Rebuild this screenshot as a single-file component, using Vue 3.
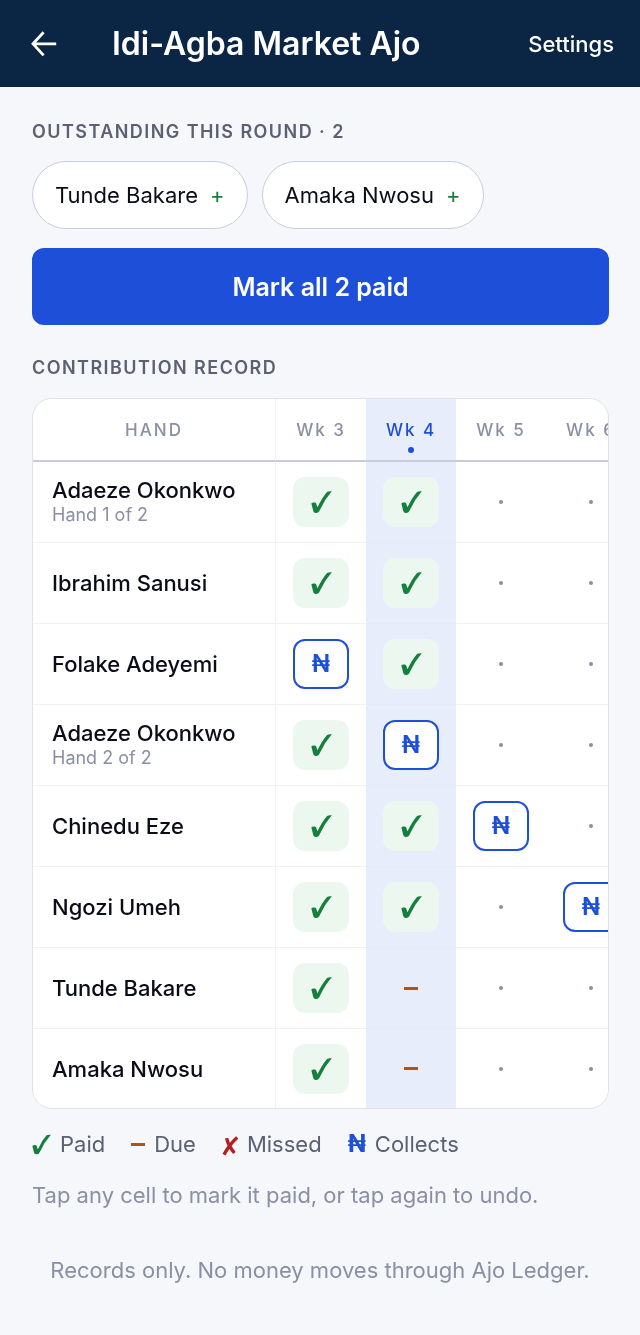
<script setup>
import { computed, ref } from 'vue'

const weeks = [3, 4, 5, 6]
const currentWeek = 4

const hands = ref([
  { name: 'Adaeze Okonkwo', note: 'Hand 1 of 2', cells: ['paid', 'paid', 'none', 'none'] },
  { name: 'Ibrahim Sanusi', cells: ['paid', 'paid', 'none', 'none'] },
  { name: 'Folake Adeyemi', cells: ['collects', 'paid', 'none', 'none'] },
  { name: 'Adaeze Okonkwo', note: 'Hand 2 of 2', cells: ['paid', 'collects', 'none', 'none'] },
  { name: 'Chinedu Eze', cells: ['paid', 'paid', 'collects', 'none'] },
  { name: 'Ngozi Umeh', cells: ['paid', 'paid', 'none', 'collects'] },
  { name: 'Tunde Bakare', cells: ['paid', 'due', 'none', 'none'] },
  { name: 'Amaka Nwosu', cells: ['paid', 'due', 'none', 'none'] }
])

const current = weeks.indexOf(currentWeek)
const outstanding = computed(() => hands.value.filter((h) => h.cells[current] === 'due'))

function markPaid(hand) {
  hand.cells[current] = 'paid'
}

function markAll() {
  outstanding.value.forEach(markPaid)
}

function toggle(hand, i) {
  const state = hand.cells[i]
  if (state === 'collects') return
  if (state === 'paid') hand.cells[i] = i <= current ? 'due' : 'none'
  else hand.cells[i] = 'paid'
}
</script>

<template>
  <div class="page">
    <header class="bar">
      <button class="back" type="button" aria-label="Back">
        <svg width="26" height="26" viewBox="0 0 26 26" fill="none" stroke="currentColor" stroke-width="2.8">
          <path d="M25.2 12.8H2.5M12.6 1.2L2 12.8l10.6 11.6" />
        </svg>
      </button>
      <h1>Idi-Agba Market Ajo</h1>
      <a class="settings" href="#settings">Settings</a>
    </header>

    <main>
      <h2>OUTSTANDING THIS ROUND · {{ outstanding.length }}</h2>
      <div class="chips">
        <button v-for="hand in outstanding" :key="hand.name" class="chip" type="button" @click="markPaid(hand)">
          <span>{{ hand.name }}</span><span class="plus">+</span>
        </button>
      </div>
      <button class="mark-all" type="button" @click="markAll">Mark all {{ outstanding.length }} paid</button>

      <h2 class="record-title">CONTRIBUTION RECORD</h2>
      <div class="record">
        <table>
          <colgroup>
            <col class="col-hand" />
            <col v-for="w in weeks" :key="w" class="col-week" />
          </colgroup>
          <thead>
            <tr>
              <th class="hand" scope="col">HAND</th>
              <th v-for="w in weeks" :key="w" scope="col" :class="{ current: w === currentWeek }">Wk {{ w }}</th>
            </tr>
          </thead>
          <tbody>
            <tr v-for="(hand, r) in hands" :key="r">
              <th class="hand" scope="row">
                {{ hand.name }}
                <small v-if="hand.note">{{ hand.note }}</small>
              </th>
              <td v-for="(state, i) in hand.cells" :key="i" :class="{ current: i === current }">
                <button
                  type="button"
                  class="cell"
                  :class="state"
                  :aria-label="`${hand.name}, week ${weeks[i]}: ${state}`"
                  @click="toggle(hand, i)"
                >
                  <svg v-if="state === 'paid'" class="tick" viewBox="0 0 22 24">
                    <path d="M.4 13.6C1.6 12.2 4.8 12.2 5.4 13.6L6.8 17.4Q11.6 7.4 16.8 1.4Q18.4.5 21.8.8Q14.2 9.6 9.4 20Q8 23.6 5 23.4Q2.6 23.6 2.2 21Z" />
                  </svg>
                  <span v-else-if="state === 'collects'">₦</span>
                  <i v-else-if="state === 'due'" class="dash"></i>
                  <i v-else class="dot"></i>
                </button>
              </td>
            </tr>
          </tbody>
        </table>
      </div>

      <ul class="legend">
        <li>
          <svg class="tick small" viewBox="0 0 22 24">
            <path d="M.4 13.6C1.6 12.2 4.8 12.2 5.4 13.6L6.8 17.4Q11.6 7.4 16.8 1.4Q18.4.5 21.8.8Q14.2 9.6 9.4 20Q8 23.6 5 23.4Q2.6 23.6 2.2 21Z" />
          </svg>
          Paid
        </li>
        <li><i class="dash"></i>Due</li>
        <li>
          <svg class="cross" viewBox="0 0 16 24">
            <path d="M15.2 5.4Q7.4 12.4 2 22.6M4.6 6.2Q6.4 14 12.4 21" />
          </svg>
          Missed
        </li>
        <li><span class="naira">₦</span>Collects</li>
      </ul>
      <p class="hint">Tap any cell to mark it paid, or tap again to undo.</p>
    </main>

    <footer>Records only. No money moves through Ajo Ledger.</footer>
  </div>
</template>

<style>
body {
  background: #f5f7fb;
}
</style>

<style scoped>
.page {
  min-height: 100vh;
  background: #f5f7fb;
  color: #0a0c18;
  font-family: Inter, "Liberation Sans", sans-serif;
  font-size: 22px;
  line-height: 28px;
}

.page *,
.page *::after {
  box-sizing: border-box;
}

button {
  margin: 0;
  padding: 0;
  border: 0;
  background: none;
  color: inherit;
  font: inherit;
  cursor: pointer;
}

.bar {
  display: flex;
  align-items: center;
  height: 87px;
  padding: 0 26px 0 31px;
  background: #0b2545;
  color: #fff;
}

.back {
  display: flex;
  width: 81px;
}

h1 {
  flex: 1;
  margin: 0;
  font-size: 32px;
  font-weight: 600;
  line-height: 42px;
}

.settings {
  color: inherit;
  font-weight: 500;
  text-decoration: none;
}

main {
  padding: 33px 31px 0 32px;
}

h2 {
  margin: 0;
  color: #5b6072;
  font-size: 18px;
  font-weight: 600;
  line-height: 24px;
  letter-spacing: 0.08em;
}

.chips {
  display: flex;
  flex-wrap: wrap;
  gap: 14px;
  margin-top: 17px;
}

.chip {
  display: flex;
  align-items: center;
  gap: 12px;
  height: 68px;
  padding: 0 22px;
  border: 1px solid #c8ccda;
  border-radius: 34px;
  background: #fff;
}

.plus {
  color: #15803d;
}

.mark-all {
  width: 100%;
  height: 77px;
  margin-top: 19px;
  border-radius: 12px;
  background: #1d4fd8;
  color: #fff;
  font-size: 25px;
  font-weight: 600;
}

.record-title {
  margin-top: 31px;
}

.record {
  margin-top: 18px;
  overflow-x: auto;
  scrollbar-width: none;
  border: 1px solid #dfe2ea;
  border-radius: 20px;
  background: #fff;
}

table {
  width: 603px;
  border-collapse: separate;
  border-spacing: 0;
  table-layout: fixed;
}

.col-hand {
  width: 243px;
}

.col-week {
  width: 90px;
}

th,
td {
  padding: 0;
}

thead th {
  position: relative;
  height: 63px;
  border-bottom: 2px solid #c8ccda;
  color: #8a8fa3;
  font-size: 17px;
  font-weight: 500;
  letter-spacing: 2px;
  text-align: center;
}

thead .current {
  color: #1d4fd8;
}

thead .current::after {
  content: "";
  position: absolute;
  bottom: 7px;
  left: 50%;
  width: 6px;
  height: 6px;
  margin-left: -3px;
  border-radius: 50%;
  background: #1d4fd8;
}

.hand {
  border-right: 1px solid #eff1f5;
}

tbody th,
tbody td {
  height: 81px;
  border-bottom: 1px solid #eff1f5;
}

tbody th {
  padding-left: 19px;
  font-weight: 500;
  line-height: 26px;
  text-align: left;
}

tbody tr:last-child > * {
  height: 79px;
  border-bottom: 0;
}

.current {
  background: #e7edfb;
}

tbody .current {
  border-bottom-color: #e4eafa;
}

small {
  display: block;
  color: #8a8fa3;
  font-size: 18px;
  font-weight: 400;
  line-height: 24px;
}

.cell {
  display: flex;
  align-items: center;
  justify-content: center;
  width: 56px;
  height: 50px;
  margin: 0 auto;
  border-radius: 12px;
}

.paid {
  background: #ecf8ef;
}

.collects {
  border: 2px solid #1d4fd8;
  background: #fff;
  color: #1d4fd8;
  font-size: 24px;
  font-weight: 600;
}

.tick {
  width: 21px;
  height: 24px;
  fill: #15803d;
}

.dash {
  width: 14px;
  height: 3px;
  background: #b45309;
}

.dot {
  width: 4px;
  height: 4px;
  border-radius: 50%;
  background: #8a8fa3;
}

.legend {
  display: flex;
  flex-wrap: wrap;
  gap: 8px 26px;
  margin: 21px 0 0;
  padding: 0;
  color: #5b6072;
  list-style: none;
}

.legend li {
  display: flex;
  align-items: center;
  gap: 9px;
}

.small {
  width: 19px;
  height: 21px;
}

.cross {
  width: 16px;
  height: 24px;
  fill: none;
  stroke: #b91c1c;
  stroke-width: 3.4;
}

.naira {
  color: #1d4fd8;
  font-size: 24px;
  font-weight: 700;
}

.hint {
  margin: 23px 0 0;
  color: #8a8fa3;
}

footer {
  padding: 47px 32px 51px;
  color: #8a8fa3;
  text-align: center;
}
</style>
